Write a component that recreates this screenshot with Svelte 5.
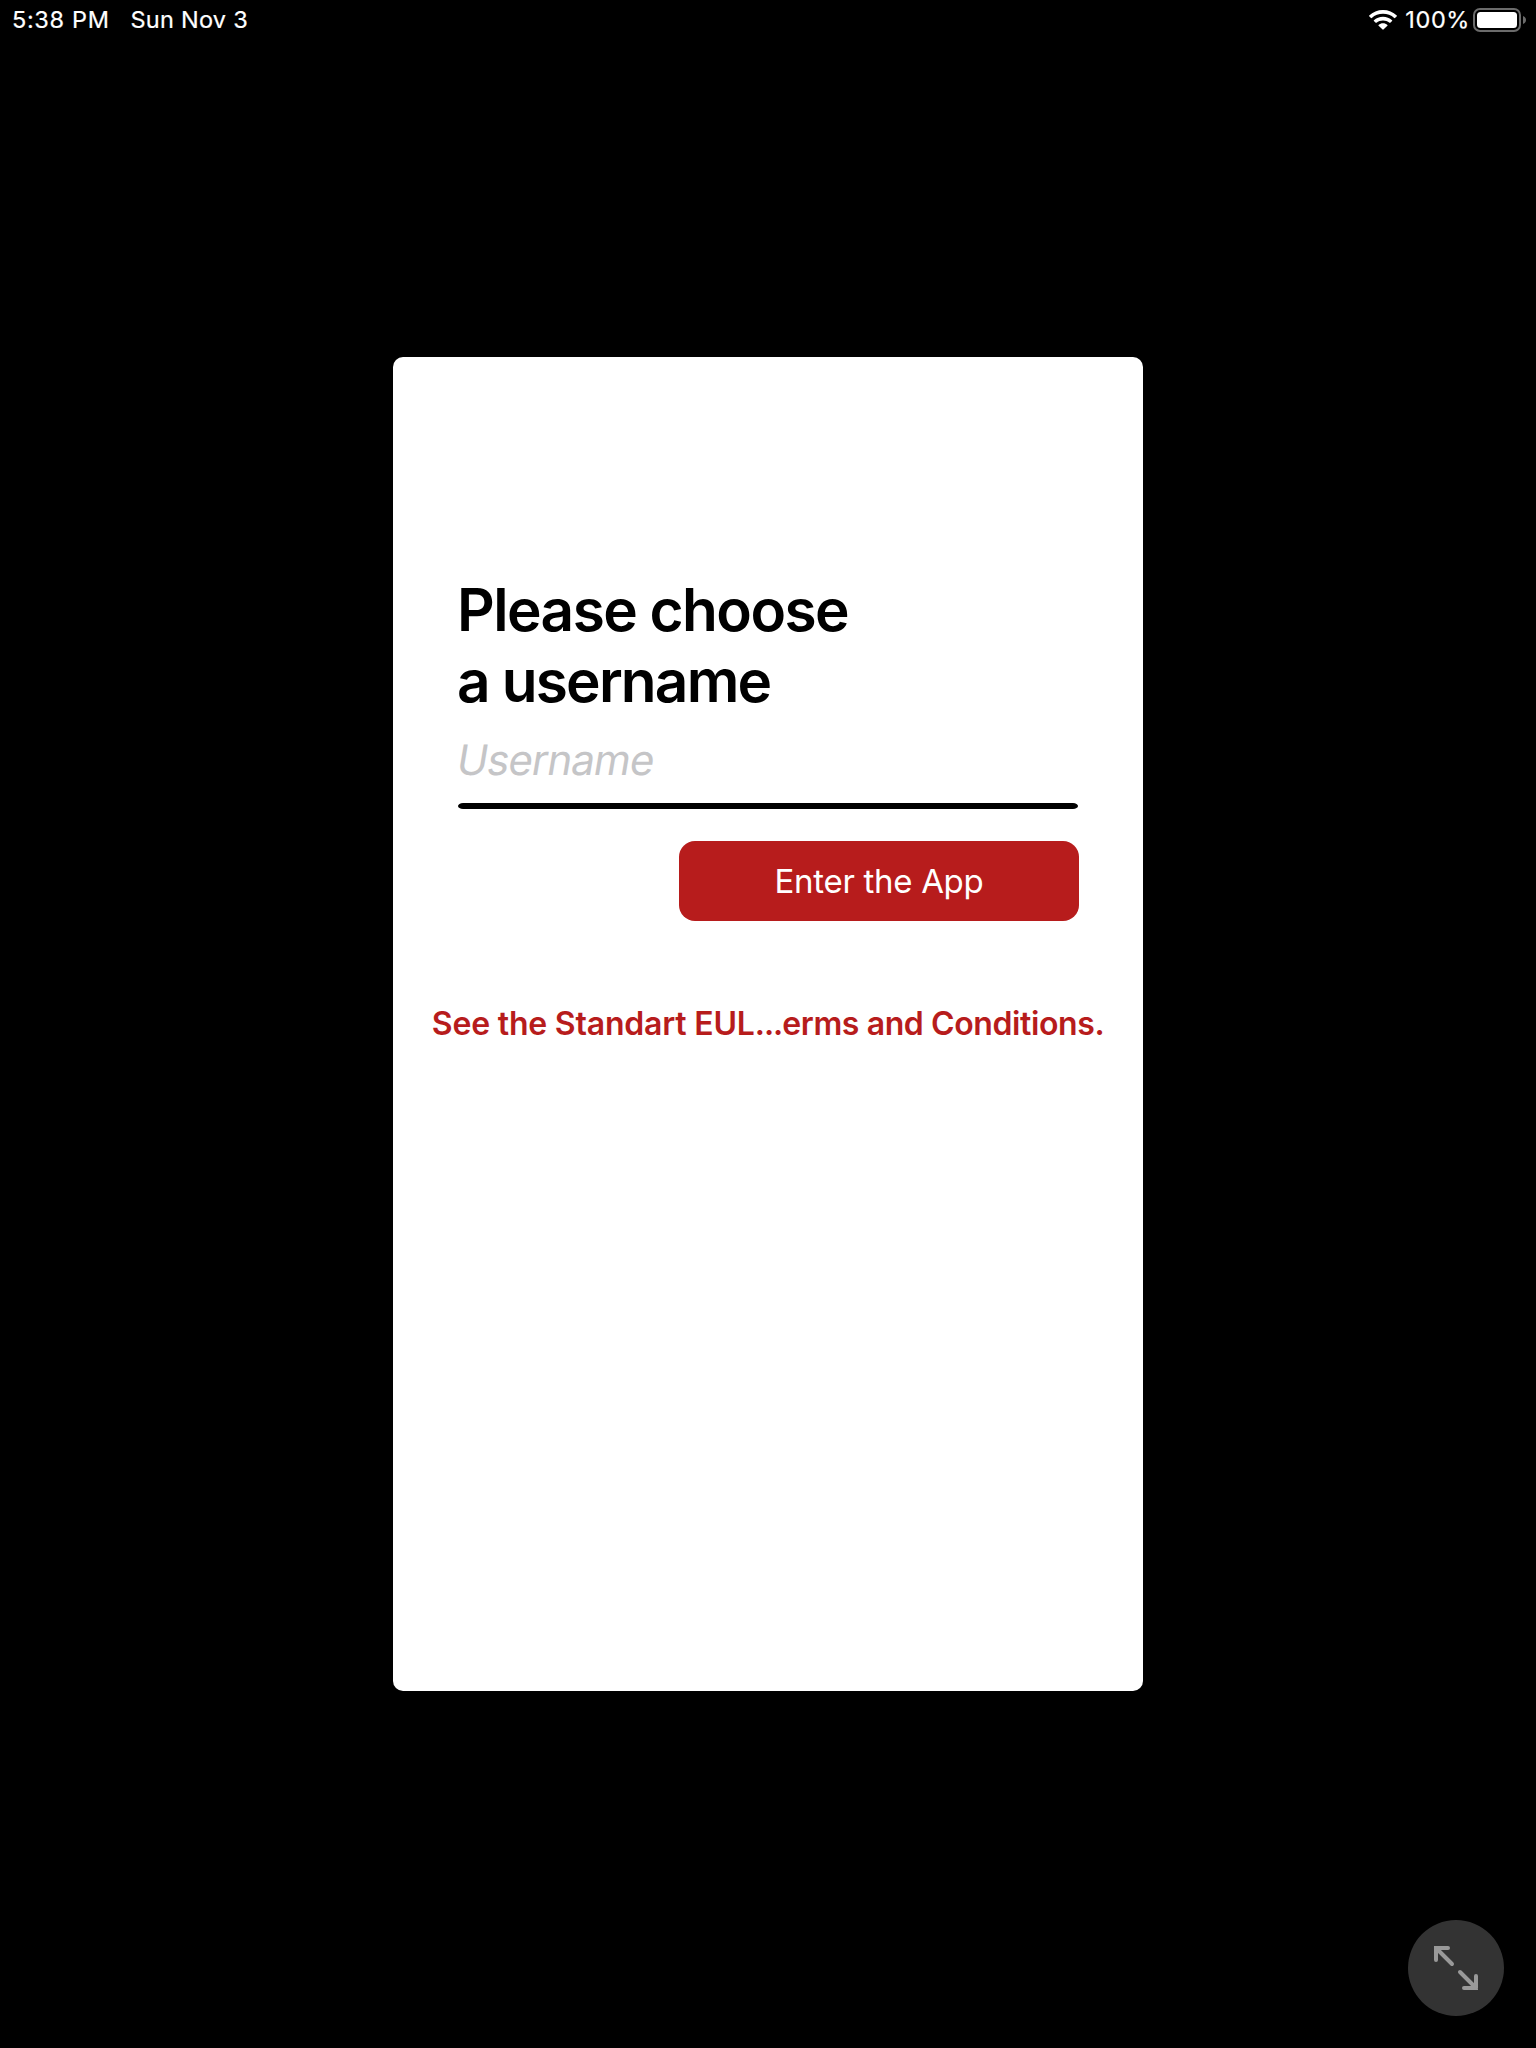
<script>
  let username = $state('');
</script>

<div class="screen">
  <header class="status">
    <div class="left">
      <span class="time">5:38 PM</span>
      <span class="date">Sun Nov 3</span>
    </div>
    <div class="right">
      <svg class="wifi" width="28" height="20" viewBox="0 0 28 20" fill="#fff">
        <path d="M14 0C19.3 0 24.2 2 27.8 5.5Q28.1 5.9 27.8 6.2L26 8Q25.6 8.3 25.2 8C22.2 5.2 18.2 3.8 14 3.8S5.800 5.200 2.800 8Q2.400 8.300 2 8L.2 6.200Q-.1 5.900 .2 5.500C3.800 2 8.700 0 14 0Z" />
        <path d="M14 6.700C17.500 6.700 20.700 8 23.100 10.200Q23.500 10.600 23.100 11L21.300 12.700Q20.900 13 20.500 12.700C18.700 11.200 16.400 10.400 14 10.400S9.300 11.200 7.500 12.700Q7.100 13 6.700 12.700L4.900 11Q4.500 10.600 4.900 10.200C7.300 8 10.500 6.700 14 6.700Z" />
        <path d="M14 13.300C15.700 13.300 17.200 13.900 18.400 14.900Q18.800 15.300 18.400 15.700L14.400 19.600Q14 19.900 13.600 19.600L9.600 15.700Q9.200 15.300 9.600 14.900C10.800 13.900 12.300 13.300 14 13.300Z" />
      </svg>
      <span class="percent">100%</span>
      <svg class="battery" width="54" height="24" viewBox="0 0 54 24">
        <rect x="1" y="1" width="46" height="22" rx="6" fill="none" stroke="#6b6b6b" stroke-width="2" />
        <rect x="4" y="4" width="40" height="16" rx="3.500" fill="#fff" />
        <path d="M50 8C52 8.700 53 10.200 53 12S52 15.300 50 16Z" fill="#6b6b6b" />
      </svg>
    </div>
  </header>

  <main class="card">
    <h1>
      <span class="line-one">Please choose</span>
      <span class="line-two">a username</span>
    </h1>
    <input type="text" placeholder="Username" aria-label="Username" bind:value={username} />
    <div class="rule"></div>
    <button class="enter" type="button">Enter the App</button>
    <button class="terms" type="button"><span class="head">See the Standart EUL</span><span class="dots">...</span><span class="tail">erms and Conditions.</span></button>
  </main>

  <button class="expand" type="button" aria-label="Expand">
    <svg width="96" height="96" viewBox="0 0 96 96" fill="none" stroke="#999" stroke-width="4" stroke-linecap="round">
      <path d="M40 28H28V40M28 28L44 44" />
      <path d="M56 68H68V56M68 68L52 52" />
    </svg>
  </button>
</div>

<style>
  :global(body) {
    margin: 0;
    background: #000;
  }

  .screen {
    position: relative;
    box-sizing: border-box;
    width: 1536px;
    height: 2048px;
    overflow: hidden;
    display: flex;
    flex-direction: column;
    align-items: center;
    background: #000;
    font-family: Inter, "Liberation Sans", sans-serif;
  }

  .status {
    box-sizing: border-box;
    width: 100%;
    height: 39px;
    padding: 0 9px 0 12px;
    display: flex;
    justify-content: space-between;
    color: #fff;
    font-size: 23.500px;
    font-weight: 400;
    line-height: 39px;
    -webkit-text-stroke: 0.200px #fff;
  }

  .left,
  .right {
    display: flex;
    white-space: nowrap;
  }

  .left {
    gap: 21px;
  }

  .time {
    letter-spacing: 0.650px;
  }

  .date {
    letter-spacing: 0.250px;
  }

  .percent {
    margin: 0 3px 0 8px;
    letter-spacing: 0.600px;
  }

  .wifi {
    margin-top: 10px;
  }

  .battery {
    margin-top: 8px;
  }

  .card {
    box-sizing: border-box;
    flex: none;
    width: 750px;
    height: 1334px;
    margin-top: 318px;
    padding: 217px 64px 0 65px;
    display: flex;
    flex-direction: column;
    align-items: stretch;
    border-radius: 10px;
    background: #fff;
  }

  h1 {
    margin: 0 0 14px -1px;
    display: flex;
    flex-direction: column;
    color: #000;
    font-size: 58.500px;
    font-weight: 600;
    line-height: 71px;
    white-space: nowrap;
  }

  .line-one {
    letter-spacing: -1.540px;
  }

  .line-two {
    letter-spacing: -1.800px;
  }

  input {
    box-sizing: border-box;
    width: 100%;
    height: 60px;
    margin-left: -3px;
    padding: 0;
    border: 0;
    outline: 0;
    background: none;
    color: #000;
    font: 400 42px/60px Inter, "Liberation Sans", sans-serif;
    letter-spacing: -0.950px;
    /* slants the roman letterforms, keeping the two-storey "a" */
    transform: skewX(-9.500deg);
    transform-origin: 0 45px;
  }

  input::placeholder {
    color: #c5c5c7;
    opacity: 1;
  }

  .rule {
    height: 6px;
    margin: 13px 1px 32px 0;
    border-radius: 5px / 3px;
    background: #000;
  }

  button {
    padding: 0;
    border: 0;
    font-family: inherit;
    white-space: nowrap;
  }

  .enter {
    align-self: flex-end;
    width: 400px;
    height: 80px;
    border-radius: 16px;
    background: #b71c1c;
    color: #fff;
    font-size: 33px;
    font-weight: 400;
    line-height: 80px;
    letter-spacing: -0.300px;
  }

  .terms {
    align-self: center;
    height: 40px;
    margin: 83px 0 0 -1px;
    background: none;
    color: #b71c1c;
    font-size: 32px;
    font-weight: 600;
    line-height: 40px;
  }

  .head {
    letter-spacing: -0.200px;
  }

  .dots {
    letter-spacing: -1px;
  }

  .tail {
    letter-spacing: -0.400px;
  }

  .expand {
    position: absolute;
    right: 32px;
    bottom: 32px;
    width: 96px;
    height: 96px;
    border-radius: 50%;
    background: #333;
  }

  .expand svg {
    display: block;
  }
</style>
